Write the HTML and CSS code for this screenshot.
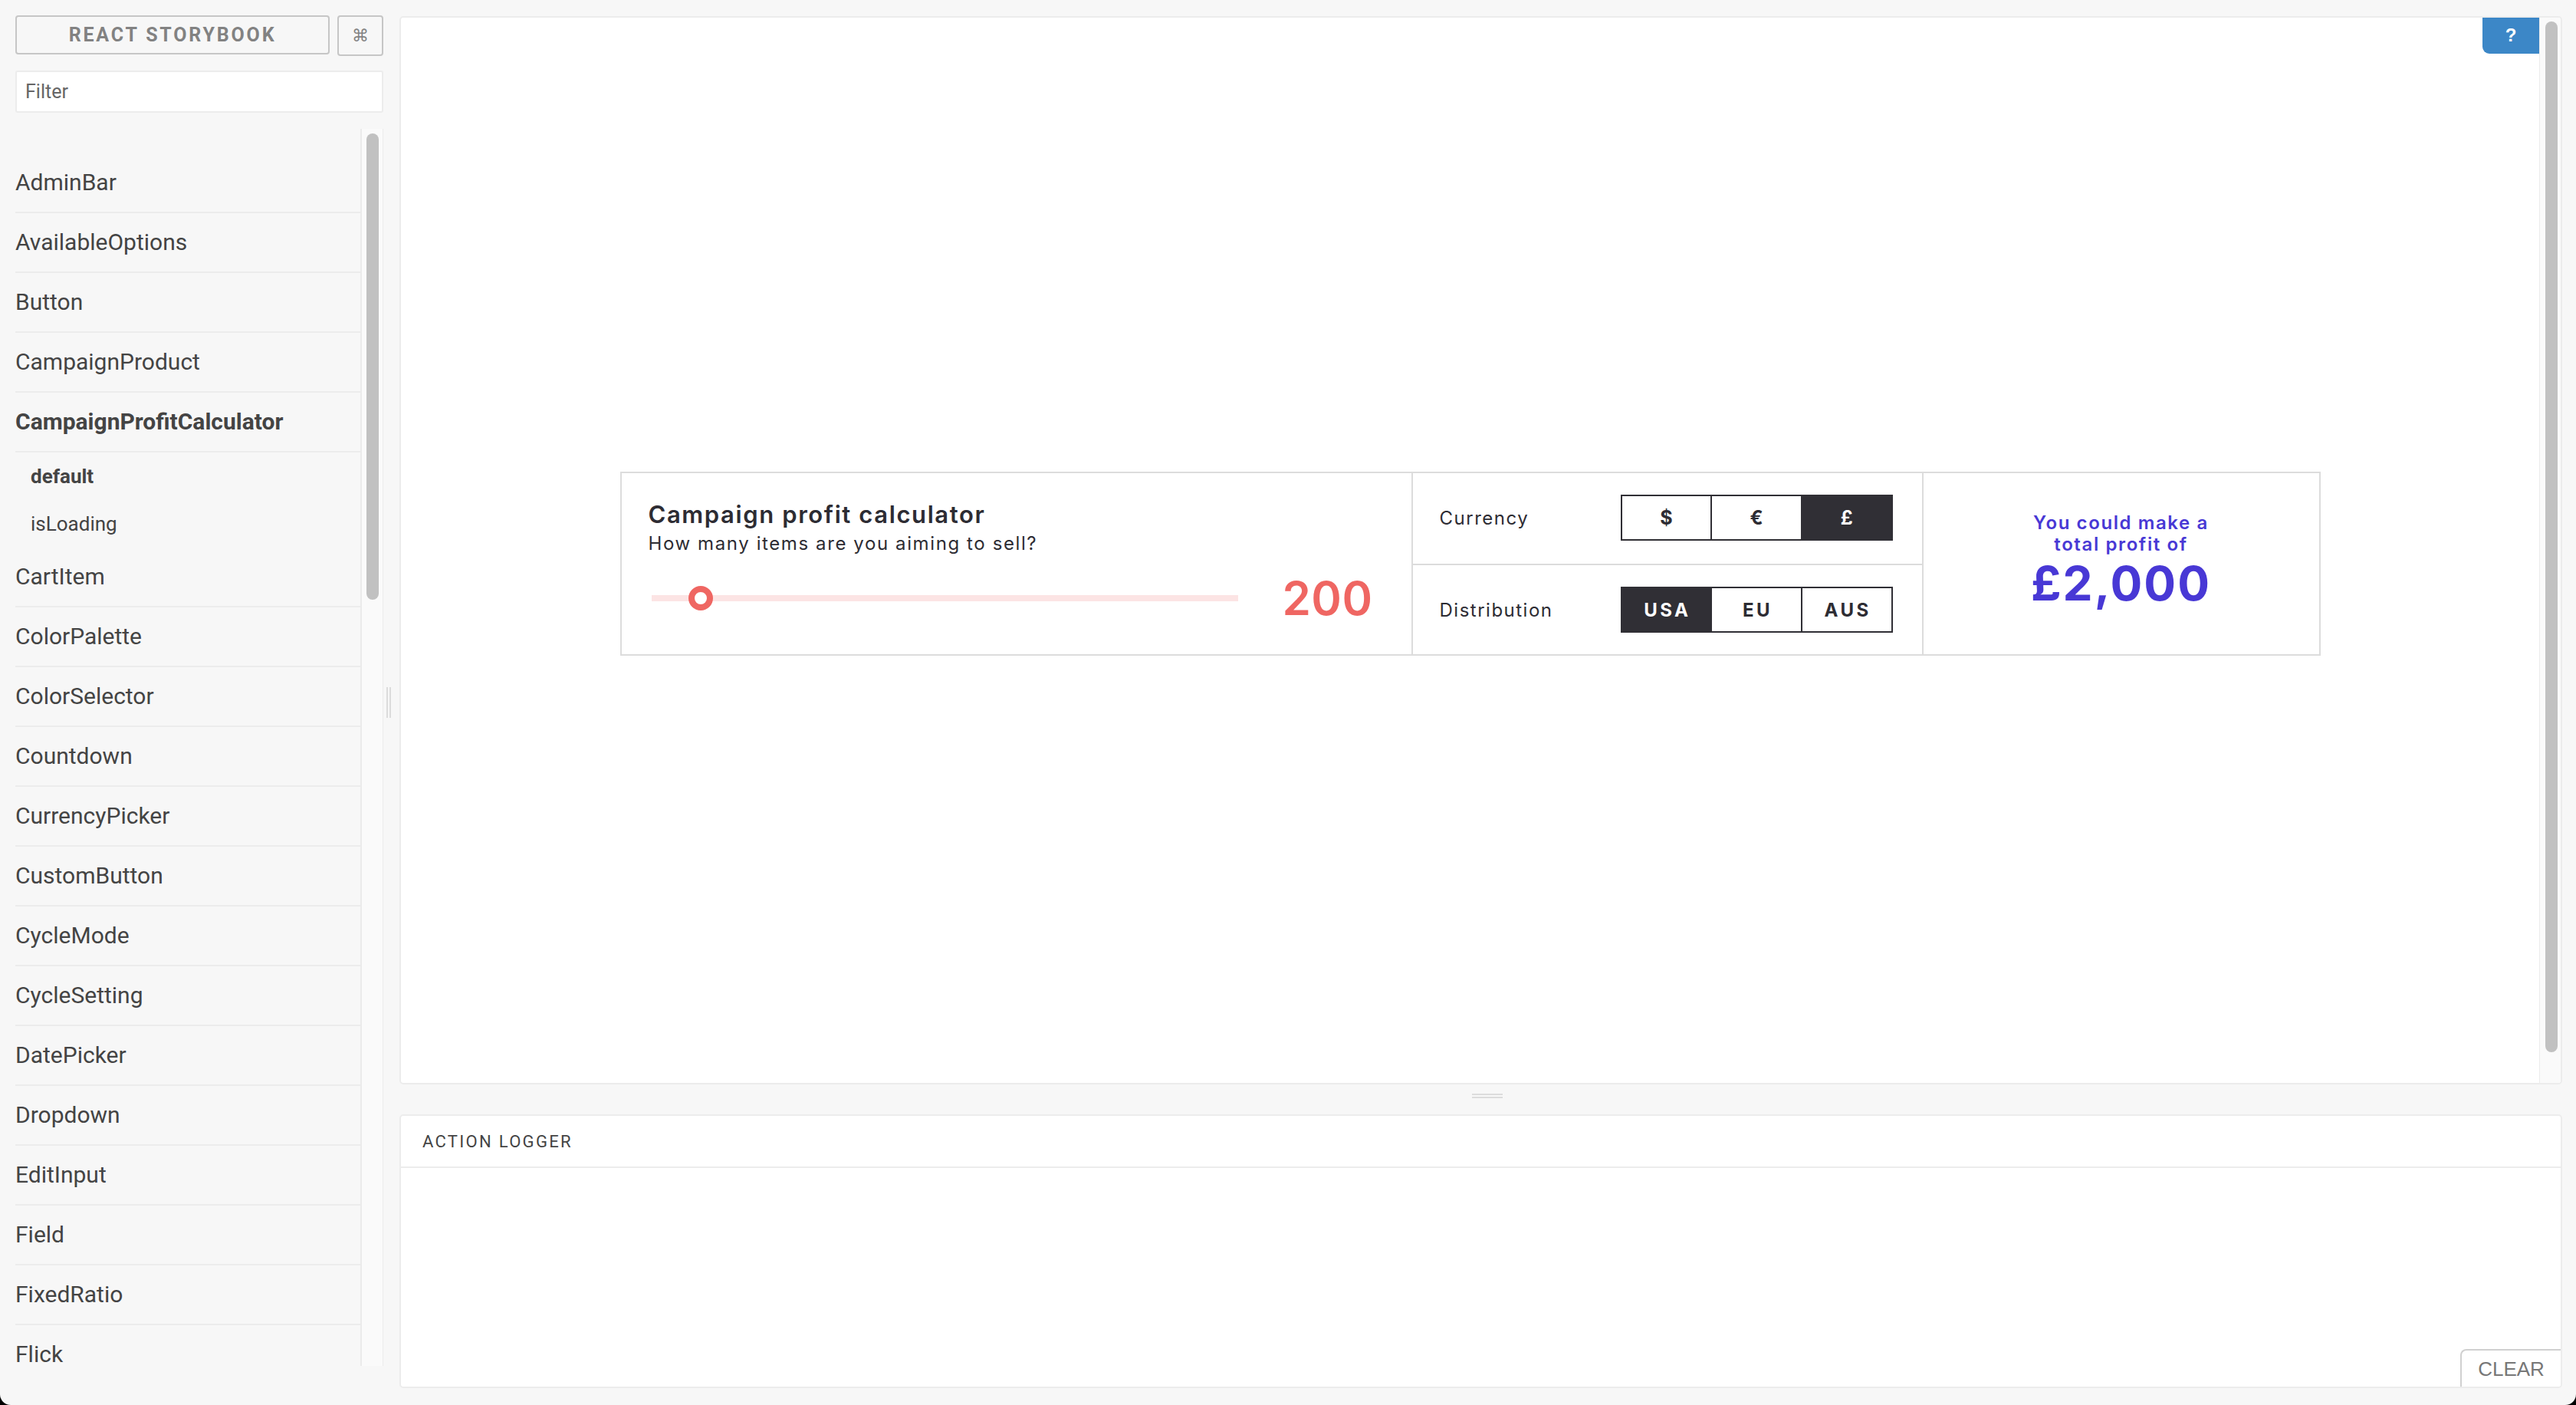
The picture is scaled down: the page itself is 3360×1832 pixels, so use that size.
FILE: index.html
```html
<!DOCTYPE html>
<html>
<head>
<meta charset="utf-8">
<title>React Storybook</title>
<link rel="stylesheet" href="styles.css">
</head>
<body>
<div class="app">
  <aside class="sidebar">
    <div class="brand-row">
      <div class="brand">React Storybook</div>
      <div class="shortcut">⌘</div>
    </div>
    <div class="filter">Filter</div>
    <div class="stories">
      <ul class="story-list">
        <li class="story"><div class="story-name">AdminBar</div></li>
        <li class="story"><div class="story-name">AvailableOptions</div></li>
        <li class="story"><div class="story-name">Button</div></li>
        <li class="story"><div class="story-name">CampaignProduct</div></li>
        <li class="story">
          <div class="story-name selected">CampaignProfitCalculator</div>
          <ul class="kinds">
            <li class="kind selected">default</li>
            <li class="kind">isLoading</li>
          </ul>
        </li>
        <li class="story"><div class="story-name">CartItem</div></li>
        <li class="story"><div class="story-name">ColorPalette</div></li>
        <li class="story"><div class="story-name">ColorSelector</div></li>
        <li class="story"><div class="story-name">Countdown</div></li>
        <li class="story"><div class="story-name">CurrencyPicker</div></li>
        <li class="story"><div class="story-name">CustomButton</div></li>
        <li class="story"><div class="story-name">CycleMode</div></li>
        <li class="story"><div class="story-name">CycleSetting</div></li>
        <li class="story"><div class="story-name">DatePicker</div></li>
        <li class="story"><div class="story-name">Dropdown</div></li>
        <li class="story"><div class="story-name">EditInput</div></li>
        <li class="story"><div class="story-name">Field</div></li>
        <li class="story"><div class="story-name">FixedRatio</div></li>
        <li class="story last"><div class="story-name">Flick</div></li>
      </ul>
      <div class="track"><div class="thumb-bar side"></div></div>
    </div>
  </aside>

  <div class="vhandle"><div class="vgrip"></div></div>

  <main class="main">
    <section class="preview">
      <div class="canvas">
        <div class="help">?</div>
        <div class="calc">
          <div class="c1">
            <h1 class="calc-title">Campaign profit calculator</h1>
            <p class="calc-sub">How many items are you aiming to sell?</p>
            <div class="slider-row">
              <div class="slider"><div class="knob"></div></div>
              <div class="amount">200</div>
            </div>
          </div>
          <div class="c2">
            <div class="opt first">
              <div class="opt-label">Currency</div>
              <div class="seg">
                <span>$</span><span>€</span><span class="on">£</span>
              </div>
            </div>
            <div class="opt">
              <div class="opt-label">Distribution</div>
              <div class="seg wide">
                <span class="on">USA</span><span>EU</span><span>AUS</span>
              </div>
            </div>
          </div>
          <div class="c3">
            <div class="lead">You could make a<br>total profit of</div>
            <div class="profit">£2,000</div>
          </div>
        </div>
      </div>
      <div class="vscroll"><div class="thumb-bar main-thumb"></div></div>
    </section>

    <div class="hhandle"><div class="hgrip"></div></div>

    <section class="logger">
      <div class="logger-head">ACTION LOGGER</div>
      <div class="clear">CLEAR</div>
    </section>
  </main>
</div>
</body>
</html>
```

FILE: styles.css
```css
* { box-sizing: border-box; }
html, body { margin: 0; padding: 0; background: #000; }

.app {
  width: 3360px;
  height: 1832px;
  background: #f7f7f7;
  display: flex;
  border-radius: 0 0 14px 14px;
  overflow: hidden;
  font-family: Roboto, "Noto Sans", sans-serif;
}

/* Sidebar */
.sidebar {
  width: 500px;
  flex: none;
  padding: 20px 0 0 20px;
  display: flex;
  flex-direction: column;
}
.brand-row {
  display: flex;
  gap: 10px;
  height: 53px;
  flex: none;
  align-items: flex-start;
}
.brand {
  width: 410px;
  height: 51px;
  border: 2px solid #c6c6c6;
  border-radius: 4px;
  display: flex;
  align-items: center;
  justify-content: center;
  font-weight: 700;
  font-size: 25px;
  letter-spacing: 2.8px;
  color: #828282;
  text-transform: uppercase;
}
.shortcut {
  width: 60px;
  height: 53px;
  border: 2px solid #c6c6c6;
  border-radius: 4px;
  display: flex;
  align-items: center;
  justify-content: center;
  font-family: "DejaVu Sans", sans-serif;
  font-size: 22px;
  color: #828282;
}
.filter {
  margin-top: 19px;
  height: 55px;
  flex: none;
  border: 2px solid #ececec;
  background: #fff;
  border-radius: 3px;
  padding-left: 11px;
  display: flex;
  align-items: center;
  font-size: 25px;
  color: #666;
}
.stories {
  margin-top: 21px;
  height: 1613px;
  flex: none;
  display: flex;
}
.story-list {
  flex: 1;
  list-style: none;
  margin: 0;
  padding: 32px 0 0;
}
.story-name {
  padding: 20px 0;
  line-height: 36px;
  font-size: 30px;
  color: #444;
  border-bottom: 2px solid #ececec;
}
.story.last .story-name { border-bottom: 0; }
.story-name.selected { font-weight: 700; }
.kinds {
  list-style: none;
  margin: 0;
  padding: 0;
}
.kind {
  padding: 16px 0 16px 20px;
  font-size: 26px;
  line-height: 30px;
  color: #444;
}
.kind.selected { font-weight: 700; }

.track {
  width: 30px;
  flex: none;
  border-left: 2px solid #ebebeb;
  border-right: 1px solid #ebebeb;
  background: #fafafa;
  padding: 6px 5px 0 6px;
}
.thumb-bar {
  width: 16px;
  background: #c1c1c1;
  border-radius: 8px;
}
.thumb-bar.side { height: 608px; }

.vhandle {
  width: 21px;
  flex: none;
  display: flex;
  align-items: center;
  padding-left: 4px;
}
.vgrip {
  width: 6px;
  height: 40px;
  border-left: 2px solid #dcdcdc;
  border-right: 2px solid #dcdcdc;
}

/* Main */
.main {
  flex: 1;
  margin-right: 18px;
  padding: 21px 0 22px;
  display: flex;
  flex-direction: column;
}
.preview {
  height: 1393px;
  flex: none;
  background: #fff;
  border: 2px solid #ececec;
  border-radius: 5px;
  display: flex;
  overflow: hidden;
}
.canvas {
  flex: 1;
  position: relative;
  display: flex;
  justify-content: center;
  align-items: flex-start;
  padding-top: 592px;
}
.help {
  position: absolute;
  top: -2px;
  right: 0;
  width: 74px;
  height: 49px;
  background: #3c87c7;
  color: #fff;
  border-radius: 0 0 0 9px;
  font-family: "Liberation Sans", sans-serif;
  font-weight: 700;
  font-size: 24px;
  display: flex;
  align-items: center;
  justify-content: center;
}
.vscroll {
  width: 28px;
  flex: none;
  border-left: 1px solid #ececec;
  background: #fafafa;
  padding: 5px 4px 0 7px;
}
.thumb-bar.main-thumb { height: 1344px; }

.hhandle {
  height: 39px;
  flex: none;
  display: flex;
  justify-content: center;
  align-items: flex-start;
  padding: 12px 0 0 17px;
}
.hgrip {
  width: 40px;
  height: 6px;
  border-top: 2px solid #dcdcdc;
  border-bottom: 2px solid #dcdcdc;
}

.logger {
  height: 357px;
  flex: none;
  background: #fff;
  border: 2px solid #ececec;
  border-radius: 5px;
  position: relative;
  overflow: hidden;
}
.logger-head {
  height: 68px;
  border-bottom: 2px solid #ececec;
  padding-left: 28px;
  display: flex;
  align-items: center;
  font-size: 22px;
  letter-spacing: 2.3px;
  color: #444;
}
.clear {
  position: absolute;
  right: 0;
  bottom: 0;
  width: 131px;
  height: 49px;
  border-top: 2px solid #d0d0d0;
  border-left: 2px solid #d0d0d0;
  border-radius: 8px 0 0 0;
  background: #fff;
  font-family: "Liberation Sans", sans-serif;
  font-size: 26px;
  color: #777;
  display: flex;
  align-items: center;
  justify-content: center;
  padding-top: 2px;
}

/* Calculator */
.calc {
  display: grid;
  grid-template-columns: 1030px 666px 518px;
  width: 2218px;
  height: 240px;
  border: 2px solid #dcdcdc;
  font-family: Inter, "Open Sans", sans-serif;
  color: #2d2c33;
}
.c1 { padding: 35px 50px 0 35px; }
.calc-title {
  font-size: 31px;
  font-weight: 600;
  line-height: 38px;
  letter-spacing: 1.6px;
  margin: 0 0 4px;
}
.calc-sub {
  font-size: 24px;
  line-height: 30px;
  letter-spacing: 1.6px;
  margin: 0;
}
.slider-row {
  display: flex;
  align-items: center;
  margin-top: 21px;
  height: 70px;
}
.slider {
  width: 765px;
  flex: none;
  height: 8px;
  background: #fce4e4;
  margin-left: 4px;
  position: relative;
}
.knob {
  position: absolute;
  left: 48px;
  top: -12px;
  width: 32px;
  height: 32px;
  border-radius: 50%;
  border: 8px solid #ef6662;
  background: #fff;
}
.amount {
  flex: 1;
  text-align: right;
  font-size: 60px;
  font-weight: 600;
  line-height: 70px;
  letter-spacing: 0.5px;
  color: #ef6662;
}
.c2 {
  border-left: 2px solid #dcdcdc;
  display: flex;
  flex-direction: column;
}
.opt {
  height: 116px;
  display: flex;
  align-items: center;
  padding: 0 38px 0 35px;
}
.opt.first {
  height: 120px;
  border-bottom: 2px solid #dcdcdc;
  padding-bottom: 2px;
}
.opt-label {
  width: 236px;
  flex: none;
  font-size: 24px;
  letter-spacing: 1.5px;
}
.seg {
  display: flex;
  width: 355px;
  height: 60px;
  border: 2px solid #302f35;
}
.seg span {
  flex: 1;
  display: flex;
  align-items: center;
  justify-content: center;
  font-weight: 700;
  font-size: 25px;
}
.seg span + span { border-left: 2px solid #302f35; }
.seg.wide span { letter-spacing: 3.5px; font-size: 24px; padding-left: 3px; }
.seg .on { background: #302f35; color: #fff; }
.c3 {
  border-left: 2px solid #dcdcdc;
  display: flex;
  flex-direction: column;
  align-items: center;
  justify-content: center;
  text-align: center;
  color: #4838d5;
  padding-bottom: 8px;
}
.lead {
  font-size: 24px;
  font-weight: 600;
  line-height: 28px;
  letter-spacing: 1.6px;
}
.profit {
  font-size: 62px;
  font-weight: 700;
  line-height: 66px;
  letter-spacing: 2px;
  margin-top: 4px;
}
```
